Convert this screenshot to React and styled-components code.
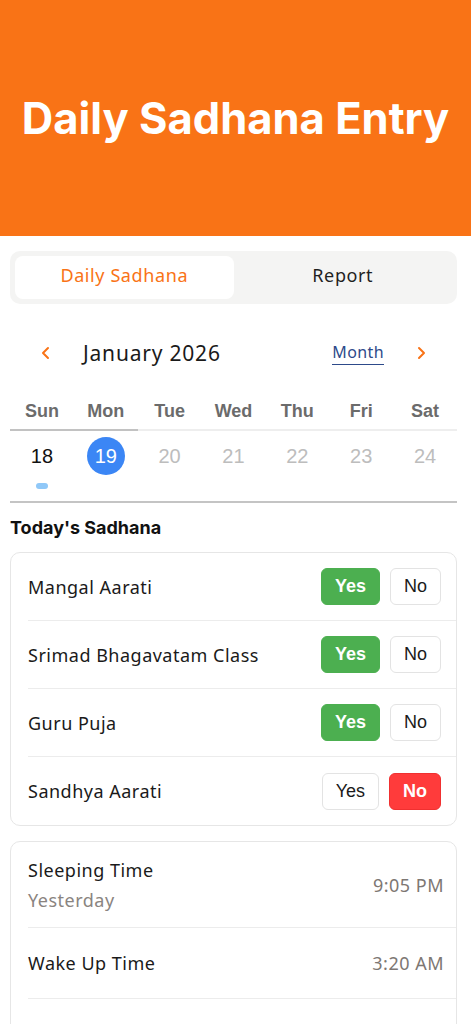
import React from "react";
import styled, { createGlobalStyle } from "styled-components";

const GlobalStyle = createGlobalStyle`
  * { box-sizing: border-box; }
  body {
    margin: 0;
    background: #ffffff;
    font-family: "Noto Sans", "Liberation Sans", sans-serif;
    color: #1a1a1a;
  }
`;

const days = [
  { name: "Sun", date: 18, state: "past", dot: true },
  { name: "Mon", date: 19, state: "selected" },
  { name: "Tue", date: 20 },
  { name: "Wed", date: 21 },
  { name: "Thu", date: 22 },
  { name: "Fri", date: 23 },
  { name: "Sat", date: 24 },
];

const practices = [
  { label: "Mangal Aarati", value: "yes" },
  { label: "Srimad Bhagavatam Class", value: "yes" },
  { label: "Guru Puja", value: "yes" },
  { label: "Sandhya Aarati", value: "no" },
];

const times = [
  { label: "Sleeping Time", sub: "Yesterday", value: "9:05 PM" },
  { label: "Wake Up Time", value: "3:20 AM" },
];

const Chevron = ({ dir }) => (
  <svg width="12" height="14" viewBox="0 0 12 14" fill="none">
    <path
      d={dir === "left" ? "M8 2 L3 7 L8 12" : "M4 2 L9 7 L4 12"}
      stroke="#f97316"
      strokeWidth="2"
      strokeLinecap="round"
      strokeLinejoin="round"
    />
  </svg>
);

const App = () => {
  return (
    <>
      <GlobalStyle />
      <Header>
        <h1>Daily Sadhana Entry</h1>
      </Header>
      <Main>
        <Tabs>
          <Tab $active>Daily Sadhana</Tab>
          <Tab>Report</Tab>
        </Tabs>

        <MonthNav>
          <NavButton>
            <Chevron dir="left" />
          </NavButton>
          <MonthTitle>January 2026</MonthTitle>
          <MonthToggle>Month</MonthToggle>
          <NavButton>
            <Chevron dir="right" />
          </NavButton>
        </MonthNav>

        <Week>
          <WeekHead>
            {days.map((d) => (
              <DayName key={d.name}>{d.name}</DayName>
            ))}
          </WeekHead>
          <WeekLine />
          <WeekDates>
            {days.map((d) => (
              <DateCell key={d.date}>
                <DateNum $state={d.state}>{d.date}</DateNum>
                {d.dot && <Dot />}
              </DateCell>
            ))}
          </WeekDates>
        </Week>

        <SectionTitle>Today's Sadhana</SectionTitle>
        <Card>
          {practices.map((p) => (
            <Row key={p.label}>
              <Label>{p.label}</Label>
              <Choices>
                <Choice $on={p.value === "yes"} $tone="yes">
                  Yes
                </Choice>
                <Choice $on={p.value === "no"} $tone="no">
                  No
                </Choice>
              </Choices>
            </Row>
          ))}
        </Card>

        <Card>
          {times.map((t) => (
            <TimeRow key={t.label}>
              <div>
                <Label>{t.label}</Label>
                {t.sub && <Sub>{t.sub}</Sub>}
              </div>
              <TimeValue>{t.value}</TimeValue>
            </TimeRow>
          ))}
          <TimeRow />
        </Card>
      </Main>
    </>
  );
};

const Header = styled.header`
  height: 236px;
  background: #f97316;
  display: flex;
  align-items: center;
  justify-content: center;
  h1 {
    margin: 0;
    color: #ffffff;
    font-family: "Inter", "Liberation Sans", sans-serif;
    font-weight: 700;
    font-size: 43.5px;
  }
`;

const Main = styled.main`
  padding: 15px 14px 0 10px;
  display: flex;
  flex-direction: column;
`;

const Tabs = styled.div`
  display: flex;
  background: #f4f4f3;
  border-radius: 10px;
  padding: 5px;
  height: 53px;
`;

const Tab = styled.div`
  flex: 1;
  display: flex;
  align-items: center;
  justify-content: center;
  border-radius: 8px;
  font-size: 18px;
  letter-spacing: 0.6px;
  padding-bottom: 6px;
  background: ${(p) => (p.$active ? "#ffffff" : "transparent")};
  color: ${(p) => (p.$active ? "#f97316" : "#1f1f1f")};
`;

const MonthNav = styled.div`
  display: flex;
  align-items: center;
  height: 44px;
  margin-top: 27px;
  padding: 0 26px 0 26px;
`;

const NavButton = styled.div`
  width: 20px;
  display: flex;
  justify-content: center;
`;

const MonthTitle = styled.div`
  flex: 1;
  font-size: 21px;
  letter-spacing: 0.8px;
  margin-left: 27px;
  color: #1a1a1a;
`;

const MonthToggle = styled.div`
  font-size: 16px;
  letter-spacing: 0.4px;
  color: #2d4a8a;
  border-bottom: 1.5px solid #2d4a8a;
  padding-bottom: 1px;
  margin-right: 27px;
`;

const Week = styled.div`
  margin-top: 18px;
  border-bottom: 2px solid #c4c4c4;
`;

const WeekHead = styled.div`
  display: grid;
  grid-template-columns: repeat(7, 1fr);
  height: 36px;
  align-items: center;
`;

const DayName = styled.div`
  text-align: center;
  font-family: "Liberation Sans", "Arial", sans-serif;
  font-weight: 700;
  font-size: 18px;
  color: #6b6b6b;
`;

const WeekLine = styled.div`
  height: 2px;
  background: linear-gradient(
    to right,
    #c2c2c2 0,
    #c2c2c2 28.6%,
    #eeeeee 28.6%,
    #eeeeee 100%
  );
`;

const WeekDates = styled.div`
  display: grid;
  grid-template-columns: repeat(7, 1fr);
  height: 70px;
  padding-top: 6px;
`;

const DateCell = styled.div`
  display: flex;
  flex-direction: column;
  align-items: center;
  gap: 8px;
`;

const DateNum = styled.div`
  width: 38px;
  height: 38px;
  border-radius: 50%;
  display: flex;
  align-items: center;
  justify-content: center;
  font-family: "Liberation Sans", "Arial", sans-serif;
  font-size: 20px;
  background: ${(p) => (p.$state === "selected" ? "#3b86f5" : "transparent")};
  color: ${(p) =>
    p.$state === "selected"
      ? "#ffffff"
      : p.$state === "past"
      ? "#111111"
      : "#bdbdbd"};
`;

const Dot = styled.div`
  width: 12px;
  height: 6px;
  border-radius: 3px;
  background: #90c8f8;
`;

const SectionTitle = styled.h2`
  margin: 14px 0 14px;
  font-family: "Inter", "Liberation Sans", sans-serif;
  font-size: 18px;
  font-weight: 700;
  color: #111111;
`;

const Card = styled.div`
  border: 1.5px solid #e6e6e6;
  border-radius: 10px;
  padding-left: 17px;
  margin-bottom: 15px;
  overflow: hidden;
`;

const Row = styled.div`
  display: flex;
  align-items: center;
  justify-content: space-between;
  height: 68px;
  padding-right: 15px;
  border-bottom: 1.5px solid #ececec;
  &:last-child {
    border-bottom: none;
  }
`;

const Label = styled.div`
  font-size: 18px;
  letter-spacing: 0.5px;
  color: #1a1a1a;
`;

const Sub = styled.div`
  font-size: 18px;
  letter-spacing: 0.5px;
  color: #8a8480;
  margin-top: 6px;
`;

const Choices = styled.div`
  display: flex;
  gap: 10px;
`;

const Choice = styled.div`
  height: 37px;
  padding: 0 13px;
  min-width: 50px;
  border-radius: 6px;
  display: flex;
  align-items: center;
  justify-content: center;
  font-family: "Liberation Sans", "Arial", sans-serif;
  font-size: 18px;
  font-weight: ${(p) => (p.$on ? 700 : 400)};
  color: ${(p) => (p.$on ? "#ffffff" : "#1a1a1a")};
  background: ${(p) =>
    !p.$on ? "#ffffff" : p.$tone === "yes" ? "#4caf50" : "#ff3b3b"};
  border: 1.5px solid
    ${(p) => (!p.$on ? "#e3e3e3" : p.$tone === "yes" ? "#4caf50" : "#f03030")};
`;

const TimeRow = styled.div`
  display: flex;
  align-items: center;
  justify-content: space-between;
  min-height: 71px;
  padding: 12px 12px 12px 0;
  border-bottom: 1.5px solid #ececec;
  &:first-child {
    min-height: 86px;
  }
  &:last-child {
    border-bottom: none;
  }
`;

const TimeValue = styled.div`
  font-size: 18px;
  letter-spacing: 0.5px;
  color: #7d7773;
`;

export default App;
